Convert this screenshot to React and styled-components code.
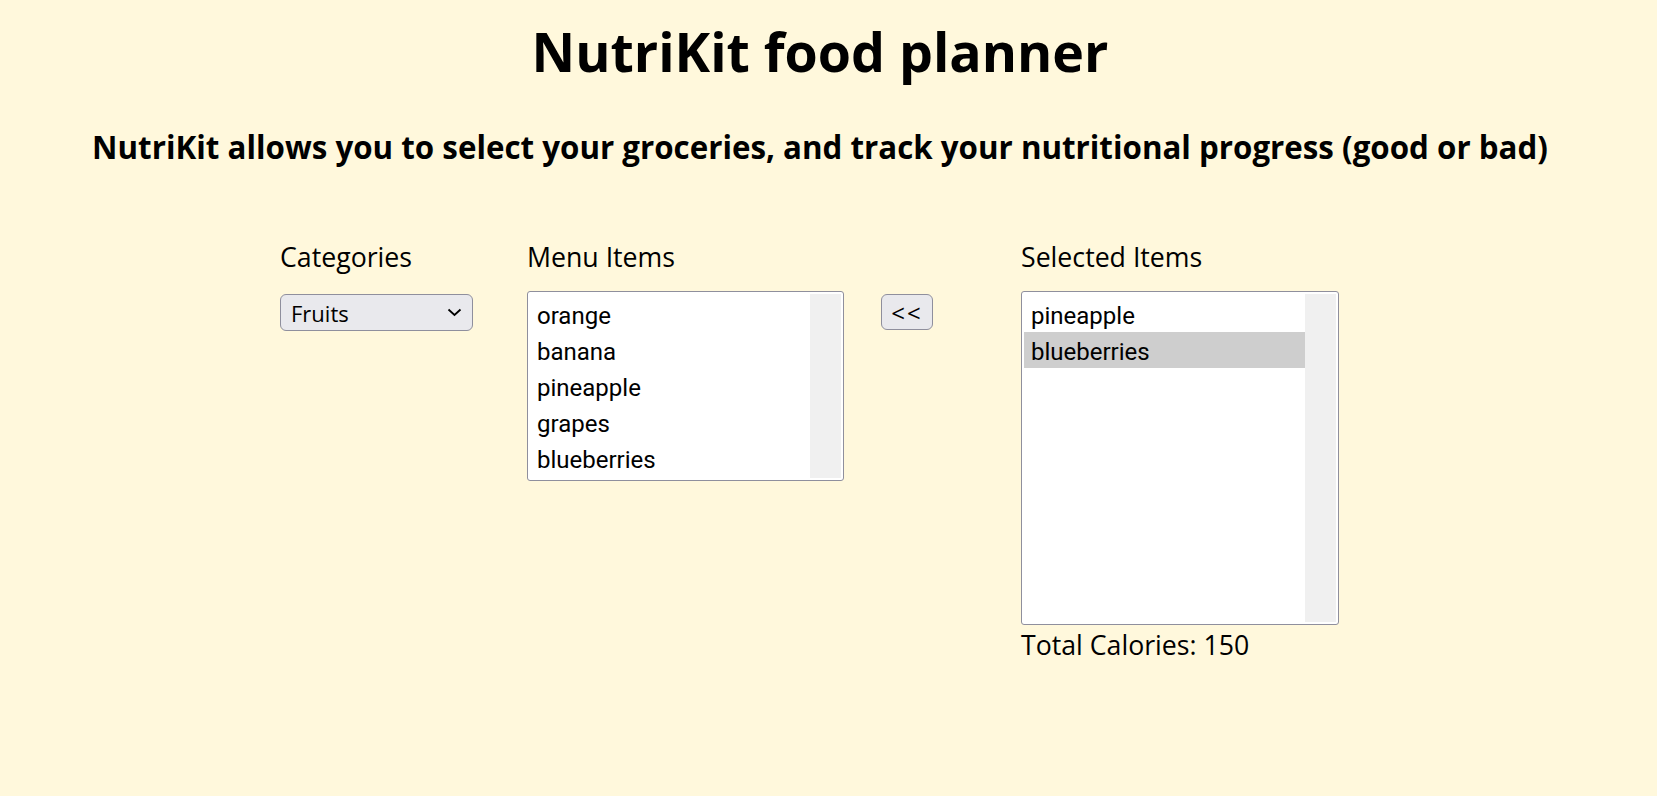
import styled, { createGlobalStyle } from "styled-components";

const GlobalStyle = createGlobalStyle`
  html, body {
    margin: 0;
    padding: 0;
    background-color: #fff8dc;
  }
  body {
    font-family: "Open Sans", "Noto Sans", sans-serif;
    color: #000;
  }
`;

const Page = styled.div`
  min-height: 796px;
  padding: 22px 17px 0 0;
  box-sizing: border-box;
`;

const Title = styled.h1`
  margin: 0;
  font-size: 53.7px;
  line-height: 60px;
  font-weight: 700;
  text-align: center;
`;

const Subtitle = styled.h3`
  margin: 47px 0 0;
  font-size: 31.3px;
  line-height: 36px;
  font-weight: 700;
  text-align: center;
`;

const Planner = styled.div`
  display: flex;
  align-items: flex-start;
  margin-top: 74px;
  padding-left: 280px;
`;

const Column = styled.div`
  display: flex;
  flex-direction: column;
  margin-left: ${(p) => p.$offset || 0}px;
  padding-top: ${(p) => p.$top || 0}px;
`;

const Label = styled.div`
  font-size: 26.7px;
  line-height: 36px;
  margin-bottom: 16px;
`;

const Dropdown = styled.div`
  width: 193px;
  height: 37px;
  margin-top: 3px;
  box-sizing: border-box;
  display: flex;
  align-items: center;
  justify-content: space-between;
  padding: 0 10px 0 10px;
  background: #e9e9ed;
  border: 1px solid #8f8f9d;
  border-radius: 6px;
  font-size: 22px;
  cursor: default;
`;

const ListBox = styled.div`
  width: ${(p) => p.$width}px;
  height: ${(p) => p.$height}px;
  box-sizing: border-box;
  display: flex;
  padding: 4px 2px 2px 2px;
  background: #fff;
  border: 1px solid #8f8f9d;
  border-radius: 3px;
`;

const Options = styled.ul`
  flex: 1;
  margin: 0;
  padding: 0;
  list-style: none;
`;

const Option = styled.li`
  font-family: Roboto, "Open Sans", sans-serif;
  font-size: 24px;
  line-height: 32px;
  padding: 4px 0 0 7px;
  background: ${(p) => (p.$selected ? "#cecece" : "transparent")};
`;

const Track = styled.div`
  width: 31px;
  margin-top: -2px;
  background: #f0f0f0;
`;

const MoveButton = styled.button`
  width: 52px;
  height: 36px;
  margin-top: 3px;
  padding: 0;
  background: #e9e9ed;
  border: 1px solid #8f8f9d;
  border-radius: 6px;
  font-family: inherit;
  font-size: 24px;
  letter-spacing: 2px;
  color: #000;
`;

const Total = styled.div`
  font-size: 26.7px;
  line-height: 36px;
  margin-top: 2px;
`;

const menuItems = ["orange", "banana", "pineapple", "grapes", "blueberries"];
const selectedItems = ["pineapple", "blueberries"];

function Chevron() {
  return (
    <svg width="15" height="9" viewBox="0 0 15 9">
      <polyline points="1.5,1.5 7.5,7 13.5,1.5" fill="none" stroke="#000" strokeWidth="1.8" />
    </svg>
  );
}

export default function App() {
  return (
    <>
      <GlobalStyle />
      <Page>
        <Title>NutriKit food planner</Title>
        <Subtitle>
          NutriKit allows you to select your groceries, and track your nutritional progress (good or bad)
        </Subtitle>
        <Planner>
          <Column>
            <Label>Categories</Label>
            <Dropdown>
              <span>Fruits</span>
              <Chevron />
            </Dropdown>
          </Column>
          <Column $offset={54}>
            <Label>Menu Items</Label>
            <ListBox $width={317} $height={190}>
              <Options>
                {menuItems.map((item) => (
                  <Option key={item}>{item}</Option>
                ))}
              </Options>
              <Track />
            </ListBox>
          </Column>
          <Column $offset={37} $top={52}>
            <MoveButton>&lt;&lt;</MoveButton>
          </Column>
          <Column $offset={88}>
            <Label>Selected Items</Label>
            <ListBox $width={318} $height={334}>
              <Options>
                {selectedItems.map((item) => (
                  <Option key={item} $selected={item === "blueberries"}>
                    {item}
                  </Option>
                ))}
              </Options>
              <Track />
            </ListBox>
            <Total>Total Calories: 150</Total>
          </Column>
        </Planner>
      </Page>
    </>
  );
}
